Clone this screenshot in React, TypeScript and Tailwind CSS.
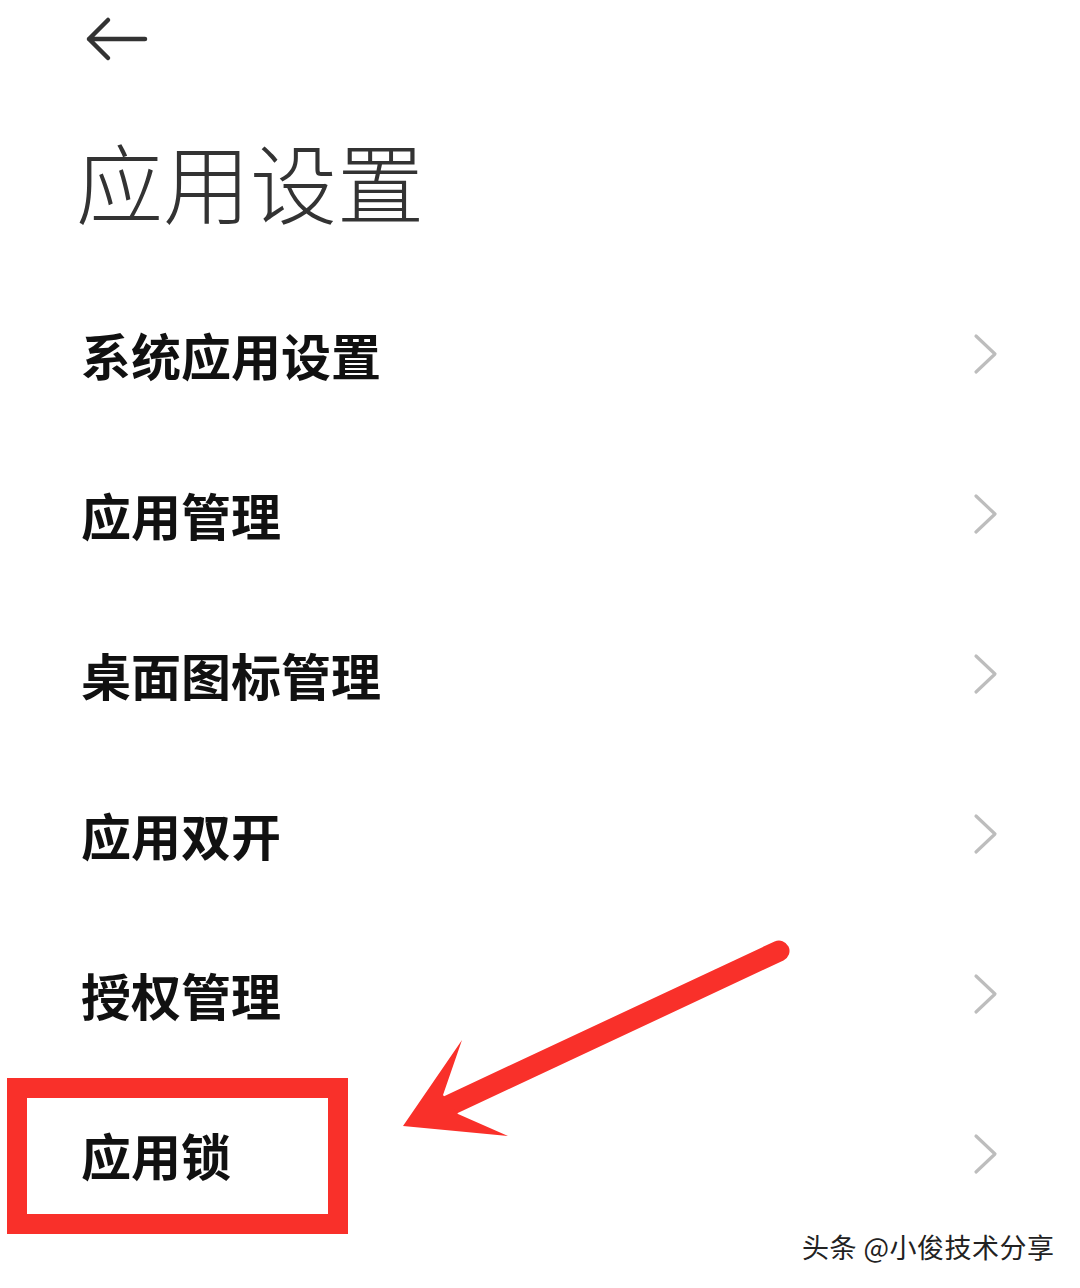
const items = ['系统应用设置', '应用管理', '桌面图标管理', '应用双开', '授权管理', '应用锁']

function Chevron() {
  return (
    <svg width="30" height="44" viewBox="0 0 30 44" className="text-[#bdbdbd]">
      <polyline points="6,4 25,22 6,40" fill="none" stroke="currentColor" strokeWidth="3.2" strokeLinecap="round" strokeLinejoin="round" />
    </svg>
  )
}

export default function App() {
  return (
    <div
      className="relative h-[1288px] w-[1080px] overflow-hidden bg-white text-[#111]"
      style={{ fontFamily: '"Noto Sans CJK SC", "Noto Sans", sans-serif' }}
    >
      {/* top bar */}
      <div className="flex h-[80px] items-start pl-[84px] pt-[16px]">
        <svg width="66" height="46" viewBox="0 0 66 46" className="text-[#333]">
          <path d="M5 23 H61 M24 4 L5 23 L24 42" fill="none" stroke="currentColor" strokeWidth="4.5" strokeLinecap="round" strokeLinejoin="round" />
        </svg>
      </div>

      <div className="flex h-[194px] items-start pl-[76px] pt-[57px]">
        <h1 className="text-[87px] font-light leading-none text-[#333]">应用设置</h1>
      </div>

      <ul>
        {items.map((label) => (
          <li key={label} className="flex h-[160px] items-center justify-between pl-[81px] pr-[80px]">
            <span className="text-[50px] font-semibold leading-none">{label}</span>
            <Chevron />
          </li>
        ))}
      </ul>

      {/* annotation: red box */}
      <div className="absolute left-[7px] top-[1078px] h-[156px] w-[341px] border-[20px] border-[#f9302a]" />

      {/* annotation: arrow */}
      <svg className="absolute left-0 top-0" width="1080" height="1288" viewBox="0 0 1080 1288">
        <line x1="779" y1="951" x2="448" y2="1106" stroke="#f9302a" strokeWidth="21" strokeLinecap="round" />
        <polygon points="403,1126 462,1040 443,1095 458,1114 508,1136" fill="#f9302a" />
      </svg>

      {/* watermark */}
      <div
        className="absolute left-[802px] top-[1233px] text-[27px] leading-none tracking-[0.5px] text-[#222]"
        style={{ textShadow: '0 0 2px #fff, 1px 1px 0 #fff' }}
      >
        头条 @小俊技术分享
      </div>
    </div>
  )
}
